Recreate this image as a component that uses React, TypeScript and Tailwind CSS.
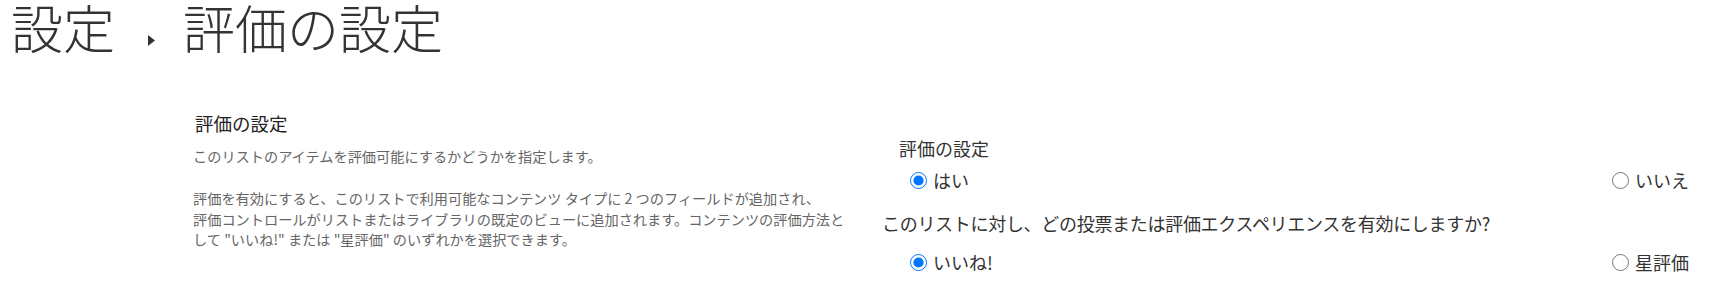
import React from "react";

const font = "font-['Segoe_UI','Noto_Sans_CJK_JP',sans-serif]";

const Radio = ({ label, checked, name }: { label: string; checked?: boolean; name: string }) => (
  <label className="flex items-center gap-[6px] text-[18px] leading-[24px] text-[#333]">
    <input
      type="radio"
      name={name}
      defaultChecked={checked}
      className="m-0 h-[17px] w-[17px] accent-[#0075ff]"
    />
    <span>{label}</span>
  </label>
);

const App = () => {
  return (
    <div className={`h-[297px] w-[1721px] overflow-hidden bg-white ${font}`}>
      <header className="flex items-start pl-[11px] text-[52px] font-light leading-[53px] text-[#333]">
        <span>設定</span>
        <svg className="ml-[33px] mr-[28px] mt-[35px]" width="7" height="11" viewBox="0 0 7 11">
          <path d="M0 0 L7 5.5 L0 11 Z" fill="#333" />
        </svg>
        <span>評価の設定</span>
      </header>

      <div className="mt-[56px] flex">
        <section className="ml-[193px] mt-[1px] w-[660px]">
          <h2 className="pl-[2px] text-[18.5px] leading-[26px] text-[#222]">評価の設定</h2>
          <p className="mt-[10px] text-[14.2px] leading-[21px] text-[#666]">
            このリストのアイテムを評価可能にするかどうかを指定します。
          </p>
          <p className="mt-[21px] whitespace-nowrap text-[14.2px] leading-[20.5px] text-[#666]">
            評価を有効にすると、このリストで利用可能なコンテンツ タイプに 2 つのフィールドが追加され、
            <br />
            評価コントロールがリストまたはライブラリの既定のビューに追加されます。コンテンツの評価方法と
            <br />
            して "いいね!" または "星評価" のいずれかを選択できます。
          </p>
        </section>

        <section className="ml-[29px] mt-[27px] w-[830px]">
          <div className="pl-[17px] text-[18px] leading-[24px] text-[#333]">評価の設定</div>
          <div className="mt-[8px] flex justify-between pl-[28px]">
            <Radio name="enable" label="はい" checked />
            <div className="w-[100px]">
              <Radio name="enable" label="いいえ" />
            </div>
          </div>
          <div className="mt-[19px] text-[18px] leading-[24px] tracking-[-0.3px] text-[#333]">
            このリストに対し、どの投票または評価エクスペリエンスを有効にしますか?
          </div>
          <div className="mt-[15px] flex justify-between pl-[28px]">
            <Radio name="kind" label="いいね!" checked />
            <div className="w-[100px]">
              <Radio name="kind" label="星評価" />
            </div>
          </div>
        </section>
      </div>
    </div>
  );
};

export default App;
